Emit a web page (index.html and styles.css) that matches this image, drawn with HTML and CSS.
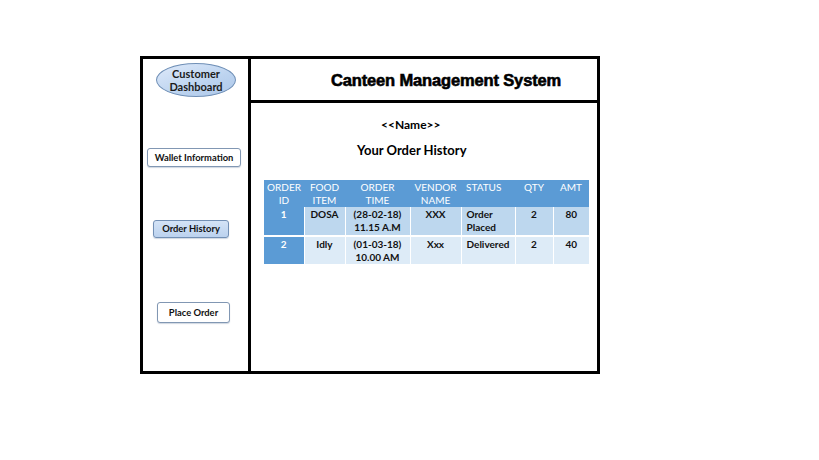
FILE: index.html
```html
<!DOCTYPE html>
<html>
<head>
<meta charset="utf-8">
<link rel="stylesheet" href="styles.css">
</head>
<body>
<div class="frame">
  <aside class="sidebar">
    <div class="ellipse">Customer<br>Dashboard</div>
    <div class="btn btn-wallet">Wallet Information</div>
    <div class="btn btn-history active">Order History</div>
    <div class="btn btn-place">Place Order</div>
  </aside>
  <main class="main">
    <header class="header"><h1 class="title">Canteen Management System</h1></header>
    <section class="content">
      <div class="name">&lt;&lt;Name&gt;&gt;</div>
      <div class="subtitle">Your Order History</div>
      <table class="orders">
        <colgroup>
          <col class="c1"><col class="c2"><col class="c3"><col class="c4"><col class="c5"><col class="c6"><col class="c7">
        </colgroup>
        <thead>
          <tr>
            <th>ORDER<br>ID</th>
            <th>FOOD<br>ITEM</th>
            <th>ORDER<br>TIME</th>
            <th>VENDOR<br>NAME</th>
            <th class="left">STATUS</th>
            <th>QTY</th>
            <th>AMT</th>
          </tr>
        </thead>
        <tbody>
          <tr class="r1">
            <td class="id">1</td>
            <td>DOSA</td>
            <td>(28-02-18)<br>11.15 A.M</td>
            <td>XXX</td>
            <td class="left">Order<br>Placed</td>
            <td>2</td>
            <td>80</td>
          </tr>
          <tr class="r2">
            <td class="id">2</td>
            <td>Idly</td>
            <td>(01-03-18)<br>10.00 AM</td>
            <td>Xxx</td>
            <td class="left">Delivered</td>
            <td>2</td>
            <td>40</td>
          </tr>
        </tbody>
      </table>
    </section>
  </main>
</div>
</body>
</html>
```
FILE: styles.css
```css
html, body {
  margin: 0;
  padding: 0;
  background: #ffffff;
}
body {
  font-family: Lato, "Liberation Sans", sans-serif;
  color: #000;
}
.frame {
  margin-left: 140px;
  margin-top: 56px;
  width: 460px;
  height: 318px;
  box-sizing: border-box;
  border: 3px solid #000;
  display: flex;
}
.sidebar {
  width: 105px;
  border-right: 3px solid #000;
  display: flex;
  flex-direction: column;
  align-items: center;
  flex-shrink: 0;
}
.ellipse {
  margin-top: 4px;
  width: 80px;
  height: 34px;
  box-sizing: border-box;
  border: 1px solid #6f8fb6;
  border-radius: 50%;
  background: linear-gradient(160deg, #dfeafa 0%, #bcd3ef 60%, #aec8ea 100%);
  font-size: 11px;
  font-weight: 700;
  line-height: 13px;
  text-align: center;
  padding-top: 3px;
  color: #1a1a1a;
  margin-left: 1px;
}
.btn {
  box-sizing: border-box;
  border: 1px solid #8197b3;
  border-radius: 3px;
  background: #fff;
  font-size: 9.4px;
  font-weight: 700;
  text-align: center;
  color: #111;
  box-shadow: 0 1px 1px rgba(120, 140, 170, 0.35);
}
.btn-wallet {
  margin-top: 51px;
  width: 94px;
  height: 19px;
  line-height: 17px;
  margin-left: -3px;
}
.btn-history {
  margin-top: 53px;
  width: 76px;
  height: 18px;
  line-height: 16px;
  margin-left: -9px;
}
.btn.active {
  background: linear-gradient(180deg, #d4e3f6 0%, #bcd2ee 100%);
  border-color: #7390b5;
}
.btn-place {
  margin-top: 64px;
  width: 73px;
  height: 21px;
  line-height: 19px;
  margin-left: -4px;
}
.main {
  flex: 1;
  display: flex;
  flex-direction: column;
}
.header {
  height: 40px;
  padding-top: 1px;
  border-bottom: 3px solid #000;
  display: flex;
  align-items: center;
}
.title {
  margin: 0 0 0 80px;
  font-family: "Liberation Sans", Arial, sans-serif;
  font-size: 16.5px;
  font-weight: 700;
  letter-spacing: -0.15px;
  -webkit-text-stroke: 0.6px #000;
}
.content {
  display: flex;
  flex-direction: column;
}
.name {
  margin-top: 15px;
  margin-left: 130px;
  font-size: 12px;
  font-weight: 700;
  line-height: 13px;
}
.subtitle {
  margin-top: 12px;
  margin-left: 106px;
  font-size: 13px;
  font-weight: 700;
  line-height: 15px;
}
.orders {
  margin-top: 22px;
  margin-left: 13px;
  border-collapse: collapse;
  table-layout: fixed;
  width: 325px;
  font-size: 10px;
  line-height: 13px;
}
.c1 { width: 40px; }
.c2 { width: 41px; }
.c3 { width: 65px; }
.c4 { width: 51px; }
.c5 { width: 54px; }
.c6 { width: 38px; }
.c7 { width: 36px; }
.orders th {
  background: #5b9bd5;
  color: #fff;
  font-weight: 400;
  padding: 1px 0 0 0;
  line-height: 13px;
  height: 26px;
  text-align: center;
  vertical-align: top;
}
.orders td {
  font-weight: 700;
  text-align: center;
  vertical-align: top;
  padding: 1px 2px 0 2px;
  border-right: 1px solid #fff;
  color: #111;
}
.orders td:last-child { border-right: none; }
.orders .left {
  text-align: left;
  padding-left: 5px;
}
.r1 td {
  background: #bdd7ee;
  height: 27px;
  border-bottom: 2px solid #fff;
}
.r2 td {
  background: #ddebf7;
  height: 26px;
}
.orders td.id {
  background: #5b9bd5;
  color: #fff;
}
```
